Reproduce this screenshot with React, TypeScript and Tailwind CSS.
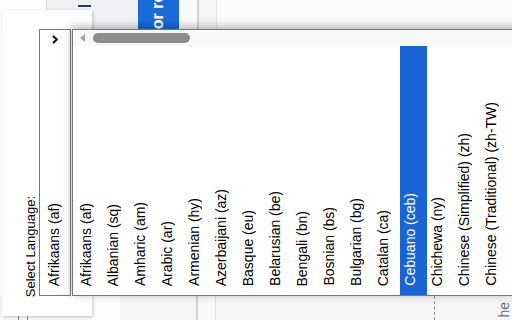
import React from "react";

const OPTIONS = [
  "Afrikaans (af)",
  "Albanian (sq)",
  "Amharic (am)",
  "Arabic (ar)",
  "Armenian (hy)",
  "Azerbaijani (az)",
  "Basque (eu)",
  "Belarusian (be)",
  "Bengali (bn)",
  "Bosnian (bs)",
  "Bulgarian (bg)",
  "Catalan (ca)",
  "Cebuano (ceb)",
  "Chichewa (ny)",
  "Chinese (Simplified) (zh)",
  "Chinese (Traditional) (zh-TW)",
];

const V = "[writing-mode:vertical-rl] rotate-180 whitespace-nowrap";

export default function App() {
  return (
    <div className="relative w-[512px] h-[320px] overflow-hidden bg-white font-['Liberation_Sans',Arial,sans-serif]">
      {/* page background */}
      <div className="flex h-full flex-col">
        <div className="flex h-[29px] shrink-0">
          <div className="w-[46px] bg-[#fdfdfd]" />
          <div className="w-[1px] bg-[#d6d6d6]" />
          <div className="flex w-[91px] items-start bg-[#eff1f4] pl-[31px] pt-[5px]">
            <div className="h-[2px] w-[13px] bg-[#2d3b58]" />
          </div>
          <div className="flex w-[41px] items-end overflow-hidden bg-[#1a6ad8] pl-[11px]">
            <span className={`${V} text-[16px] font-bold leading-[18px] text-white`}>or review</span>
          </div>
          <div className="w-[18px] bg-[#fbfbfb]" />
          <div className="w-[2px] bg-[#d2d2d2]" />
          <div className="w-[17px] bg-[#f6f6f6]" />
          <div className="w-[1px] bg-[#e2e2e2]" />
          <div className="flex-1 bg-[#fbfbfb]" />
        </div>
        <div className="flex-1 bg-white" />
        <div className="flex h-[24px] shrink-0">
          <div className="flex w-[92px] items-end bg-[#f8f8f8] pl-[18px]">
            <div className="h-[4px] w-[1px] bg-[#8a8a8a]" />
            <div className="ml-[8px] h-[4px] w-[1px] bg-[#8a8a8a]" />
          </div>
          <div className="w-[28px] bg-[#fdfdfd]" />
          <div className="w-[77px] bg-[#f5f5f5]" />
          <div className="w-[2px] bg-[#d2d2d2]" />
          <div className="w-[17px] bg-[#f8f8f8]" />
          <div className="w-[1px] bg-[#e2e2e2]" />
          <div className="w-[219px] bg-[#f5f5f5]" />
          <div className="w-0 border-l border-dashed border-[#8a8a8a]" />
          <div className="flex flex-1 items-end bg-[#f5f5f5] pl-[61px]">
            <span className={`${V} mb-[2px] text-[14px] leading-[16px] text-[#6f6f6f]`}>he</span>
          </div>
        </div>
      </div>

      {/* label + select card */}
      <div className="absolute left-[2px] top-[10px] flex h-[306px] w-[90px] items-start bg-white pl-[21px] shadow-[1px_1px_3px_rgba(0,0,0,0.22)]">
        <span className={`${V} mt-auto mb-[19px] text-[13px] leading-[15px] text-black`}>Select Language:</span>
        <div className="ml-[1px] mt-[19px] flex h-[267px] w-[32px] flex-col justify-between border border-[#767676] bg-white pb-[9px] pl-[6px] pt-[5px]">
          <svg width="6" height="9" viewBox="0 0 6 9" className="ml-[6px]">
            <polyline points="1,1 4.8,4.5 1,8" fill="none" stroke="#000" strokeWidth="2" />
          </svg>
          <span className={`${V} text-[14px] leading-[16px] text-black`}>Afrikaans (af)</span>
        </div>
      </div>

      {/* open popup */}
      <div className="absolute left-[72px] top-[29px] flex h-[267px] w-[470px] flex-col border border-[#767676] bg-white shadow-[0_-2px_9px_rgba(0,0,0,0.3)]">
        <div className="flex h-[16px] shrink-0 items-center bg-[#f8f8f8] pl-[7px]">
          <svg width="5" height="8" viewBox="0 0 5 8">
            <polygon points="5,0 5,8 0,4" fill="#a3a3a3" />
          </svg>
          <div className="ml-[8px] h-[10px] w-[97px] rounded-full bg-[#8d8d8d]" />
        </div>
        <div className="flex flex-1 pl-[3px]">
          {OPTIONS.map((o, i) => (
            <div
              key={o}
              className={
                i === 12
                  ? "flex w-[27px] shrink-0 items-end bg-[#1a64d4] pb-[9px] pl-[2px] text-white"
                  : "flex w-[27px] shrink-0 items-end pb-[9px] pl-[2px] text-black"
              }
            >
              <span className={`${V} text-[14px] leading-[16px]`}>{o}</span>
            </div>
          ))}
        </div>
      </div>
    </div>
  );
}
